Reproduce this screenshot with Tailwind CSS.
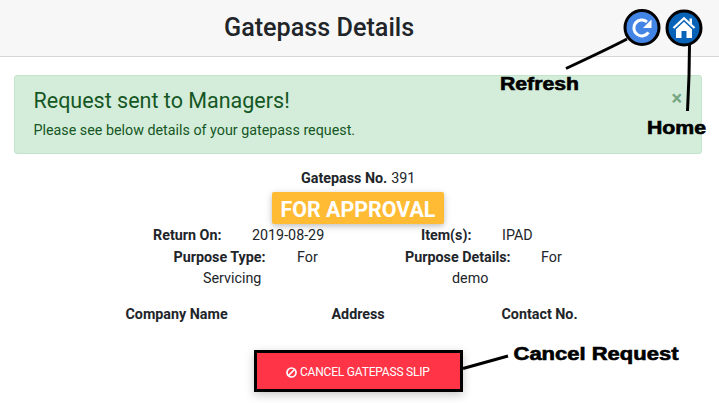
<!DOCTYPE html>
<html lang="en">
<head>
<meta charset="utf-8">
<title>Gatepass Details</title>
<script src="https://cdn.jsdelivr.net/npm/@tailwindcss/browser@4"></script>
</head>
<body class="relative h-[403px] w-[719px] overflow-hidden bg-white font-[Roboto,sans-serif] text-[14.3px] leading-[21px] text-[#212529]">
<header class="flex h-[57px] border-b border-[#d6d6d6] bg-[#f7f7f7] pl-[224px] pt-[12px]">
  <h1 class="whitespace-nowrap text-[25.2px] font-medium leading-8">Gatepass Details</h1>
</header>
<main>
  <section class="ml-[14px] mt-[18px] flex h-[79px] w-[688px] justify-between rounded-[3px] border border-[#c3e6cb] bg-[#d4edda] pl-[18.5px] pr-[19px] text-[#155724]">
    <div class="whitespace-nowrap pt-[12px]">
      <h2 class="text-[21.5px] leading-[26px]">Request sent to Managers!</h2>
      <p class="mt-[6px]">Please see below details of your gatepass request.</p>
    </div>
    <button class="mt-[10px] h-6 text-[20px] font-bold leading-6 text-[#76a582]" aria-label="Close">×</button>
  </section>
  <p class="ml-[301px] mt-[14px] flex h-[21px] gap-[4px] whitespace-nowrap"><b>Gatepass No.</b><span>391</span></p>
  <div class="ml-[272px] mt-[3px] flex h-8 w-[172px] items-center justify-center whitespace-nowrap rounded-[2px] bg-[#ffbb33] pt-[2px] text-[21.4px] font-bold text-white shadow-[0_2px_5px_rgba(0,0,0,.16),0_2px_10px_rgba(0,0,0,.12)]">FOR APPROVAL</div>
  <div class="mt-px flex h-[21px] whitespace-nowrap pl-[153px]"><b class="w-[99px]">Return On:</b><span class="w-[169px]">2019-08-29</span><b class="w-[81px]">Item(s):</b><span>IPAD</span></div>
  <div class="mt-px flex h-[21px] whitespace-nowrap pl-[173.5px]"><b class="w-[123.5px]">Purpose Type:</b><span class="w-[108px]">For</span><b class="w-[136px]">Purpose Details:</b><span>For</span></div>
  <div class="flex h-[21px] whitespace-nowrap pl-[203px]"><span class="w-[249px]">Servicing</span><span>demo</span></div>
  <div class="mt-[15px] flex h-[21px] whitespace-nowrap pl-[125.5px] font-bold"><span class="w-[206px]">Company Name</span><span class="w-[170px]">Address</span><span>Contact No.</span></div>
  <button class="ml-[254px] mt-[25px] flex h-[42px] w-[209px] items-center gap-[3px] whitespace-nowrap border-[3px] border-black bg-[#ff3547] pl-[29px] pt-[2px] text-[12px] tracking-[-0.2px] text-white shadow-[0_3px_9px_rgba(0,0,0,.22)]">
    <svg class="size-[11px] shrink-0" viewBox="0 0 11 11" fill="none" stroke="#fff" stroke-width="1.7"><circle cx="5.5" cy="5.5" r="4.5"/><path d="M2.5 8.5 8.5 2.5"/></svg>
    <span>CANCEL GATEPASS SLIP</span>
  </button>
</main>
<svg class="pointer-events-none absolute inset-0" width="719" height="403" viewBox="0 0 719 403">
  <g stroke="#000" stroke-width="3" fill="none">
    <circle cx="642" cy="27.500" r="17" fill="#4285e5"/>
    <circle cx="684" cy="28" r="17" fill="#0863b8"/>
    <path d="M627 39 Q612 47 566 68.500M689.500 45 L689 76 L687.500 111M463 368.500 L508 356"/>
  </g>
  <path d="M648.500 32.300 A8 8 0 1 1 647 21.800" fill="none" stroke="#fff" stroke-width="3"/>
  <path d="M651.500 19.500v8.500h-8.500z" fill="#fff"/>
  <path d="M673.500 28 684 18.200 694.500 28" fill="none" stroke="#fff" stroke-width="2.300"/>
  <path d="M689.500 18.500h2.500v6l-2.500-2.500zM676 29.200 684 21.800l8 7.400V38h-5.500v-7h-5v7H676z" fill="#fff"/>
  <g font-family="'Liberation Sans', Arial, sans-serif" font-weight="700" font-size="18" fill="#000" stroke="#000" stroke-width=".6">
    <text x="500" y="89.500" textLength="79" lengthAdjust="spacingAndGlyphs">Refresh</text>
    <text x="647" y="133.500" textLength="59" lengthAdjust="spacingAndGlyphs">Home</text>
    <text x="513.500" y="359.500" textLength="165" lengthAdjust="spacingAndGlyphs">Cancel Request</text>
  </g>
</svg>
</body>
</html>
